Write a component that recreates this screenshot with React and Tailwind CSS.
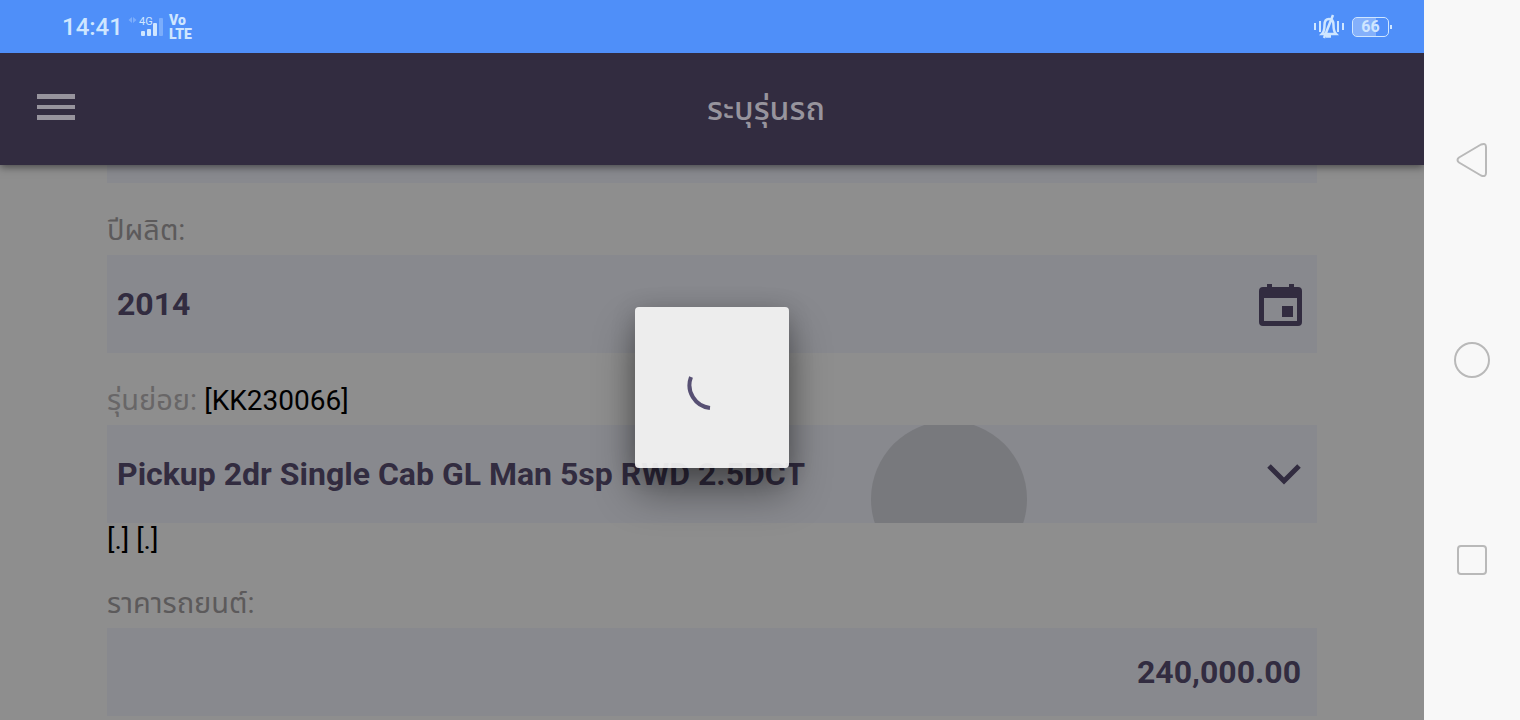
import { useState } from 'react';

function StatusBar() {
  return (
    <div className="relative z-20 h-[53px] bg-[#4f8ff9] flex items-center justify-between pl-[62px] pr-8 text-[#cfe6ff]">
      <div className="flex items-center">
        <span className="w-[61px] pt-px text-2xl font-medium">14:41</span>
        {/* Mobile signal */}
        <svg className="ml-1" width="38" height="28" viewBox="0 0 38 28" fill="currentColor">
          <path d="M5 4L1.500 7L5 10z M6 4L9.500 7L6 10z" opacity="0.35" />
          <text x="12" y="12" fontSize="11" fontFamily="Roboto, sans-serif">4G</text>
          <rect x="14" y="18" width="4" height="5" rx="1" />
          <rect x="20" y="16" width="4" height="7" rx="1" />
          <rect x="26" y="10" width="4" height="13" rx="1" />
          <rect x="32" y="5" width="4" height="18" rx="1" opacity="0.35" />
        </svg>
        <div className="ml-1 flex flex-col text-sm leading-[14px] font-black">
          <span>Vo</span>
          <span>LTE</span>
        </div>
      </div>
      <div className="flex items-center gap-2">
        {/* Vibrate */}
        <svg width="30" height="26" viewBox="0 0 30 26" fill="none" stroke="currentColor" strokeWidth="2">
          <path d="M1 9v7 M6 7v11 M24 7v11 M29 9v7" />
          <path d="M8 20h14c-2-2-2.500-4-2.500-9c0-4-1.500-6-4.500-6s-4.500 2-4.500 6c0 5-.5 7-2.500 9z M12 22.500h5 M19 1L10 24" strokeWidth="2.5" />
        </svg>
        <div className="flex items-center">
          <div className="relative w-[37px] h-5 rounded-[5px] border border-current overflow-hidden flex items-center justify-center">
            <div className="absolute inset-y-0 left-0 w-2/3 bg-white/30" />
            <span className="relative text-base leading-5 font-bold">66</span>
          </div>
          <div className="w-[2px] h-1 ml-px bg-current" />
        </div>
      </div>
    </div>
  );
}

function NavBar() {
  return (
    <nav className="w-24 shrink-0 bg-[#f8f8f8] flex flex-col items-center justify-center gap-40">
      <button type="button" aria-label="Back">
        <svg width="40" height="40" viewBox="0 0 40 40" fill="none" stroke="#b9b9b9" strokeWidth="2" strokeLinejoin="round">
          <path d="M7 17.500L29 4.500Q34 2.500 34 7V33Q34 37.500 29 35.500L7 22.500Q4 20 7 17.500z" />
        </svg>
      </button>
      <button type="button" aria-label="Home">
        <svg width="40" height="40" viewBox="0 0 40 40" fill="none" stroke="#b9b9b9" strokeWidth="2">
          <circle cx="20" cy="20" r="17" />
        </svg>
      </button>
      <button type="button" aria-label="Recent apps">
        <svg width="40" height="40" viewBox="0 0 40 40" fill="none" stroke="#b9b9b9" strokeWidth="2">
          <rect x="6" y="6" width="28" height="28" rx="3" />
        </svg>
      </button>
    </nav>
  );
}

function LoadingDialog() {
  return (
    <div className="absolute inset-0 z-20 pt-[2px] flex items-center justify-center">
      <div
        role="status"
        aria-label="Loading"
        className="w-[154px] h-[161px] pb-1 rounded bg-[#f4f4f4]/93 flex items-center justify-center shadow-[0_24px_40px_rgba(0,0,0,0.4),0_4px_24px_rgba(0,0,0,0.2)]"
      >
        <svg width="52" height="52" viewBox="0 0 52 52" fill="none" stroke="#575073" strokeWidth="4">
          <path d="M5 17A23 23 0 0 0 24 48" />
        </svg>
      </div>
    </div>
  );
}

export default function App() {
  const [year, setYear] = useState('2014');
  const [price, setPrice] = useState('240,000.00');

  return (
    <div className="min-h-screen flex font-[Roboto,'Noto_Sans_Thai',sans-serif]">
      <div className="flex-1 min-w-0 flex flex-col overflow-hidden bg-[#8e8e8e]">
        <StatusBar />

        <div className="relative flex-1">
          {/* App bar */}
          <header className="relative z-10 h-28 bg-[#322c40] flex items-center text-[#97949d] shadow-[0_2px_8px_rgba(0,0,0,0.5)]">
            <button type="button" aria-label="Menu" className="w-[108px] pl-[37px] pb-1">
              <svg width="38" height="26" viewBox="0 0 38 26" fill="currentColor">
                <path d="M0 0h38v5H0z M0 11h38v4H0z M0 21h38v5H0z" />
              </svg>
            </button>
            <h1 className="flex-1 text-center text-[32px] font-medium">ระบุรุ่นรถ</h1>
          </header>

          <form className="px-[107px] text-[28px] text-[#322c40]">
            <div className="h-[18px] bg-[#88898e]" />

            <label htmlFor="year" className="block h-[72px] pt-[27px] text-[29px] leading-10 text-[#5c5a5b]">ปีผลิต:</label>
            <div className="relative">
              <input
                id="year"
                value={year}
                onChange={e => setYear(e.target.value)}
                className="block w-full h-[98px] px-[10px] bg-[#88898e] text-[32px] font-bold outline-none"
              />
              {/* Calendar */}
              <svg className="absolute right-[15px] top-7 pointer-events-none" width="43" height="44" viewBox="0 0 43 44" fill="currentColor">
                <path fillRule="evenodd" d="M8 1h5v3h17V1h5v3h4q4 0 4 4v31q0 4-4 4H4q-4 0-4-4V8q0-4 4-4h4z M5 15v23h33V15z" />
                <rect x="23" y="23" width="11" height="11" />
              </svg>
            </div>

            <label htmlFor="model" className="block h-[72px] pt-[27px] text-[29px] leading-10 text-[#686667]">
              รุ่นย่อย: <span className="text-[28px] text-black">[KK230066]</span>
            </label>
            <div className="relative overflow-hidden bg-[#88898e]">
              {/* Touch ripple */}
              <span className="absolute left-[764px] -top-1 size-[156px] rounded-full bg-[#78797d]" />
              <select id="model" className="relative block w-full h-[98px] px-[10px] appearance-none bg-transparent text-[32px] font-bold outline-none">
                <option>Pickup 2dr Single Cab GL Man 5sp RWD 2.5DCT</option>
              </select>
              <svg className="absolute right-4 top-[38px] pointer-events-none" width="34" height="23" viewBox="0 0 34 23" fill="none" stroke="currentColor" strokeWidth="5">
                <path d="M2 3L17 18L32 3" />
              </svg>
            </div>
            <p className="leading-[33px] text-black">[.] [.]</p>

            <label htmlFor="price" className="block h-[72px] pt-[27px] text-[29px] leading-10 text-[#5c5a5b]">ราคารถยนต์:</label>
            <input
              id="price"
              value={price}
              onChange={e => setPrice(e.target.value)}
              className="block w-full h-[88px] px-4 bg-[#88898e] text-right text-[32px] font-bold outline-none"
            />
          </form>

          <LoadingDialog />
        </div>
      </div>
      <NavBar />
    </div>
  );
}
